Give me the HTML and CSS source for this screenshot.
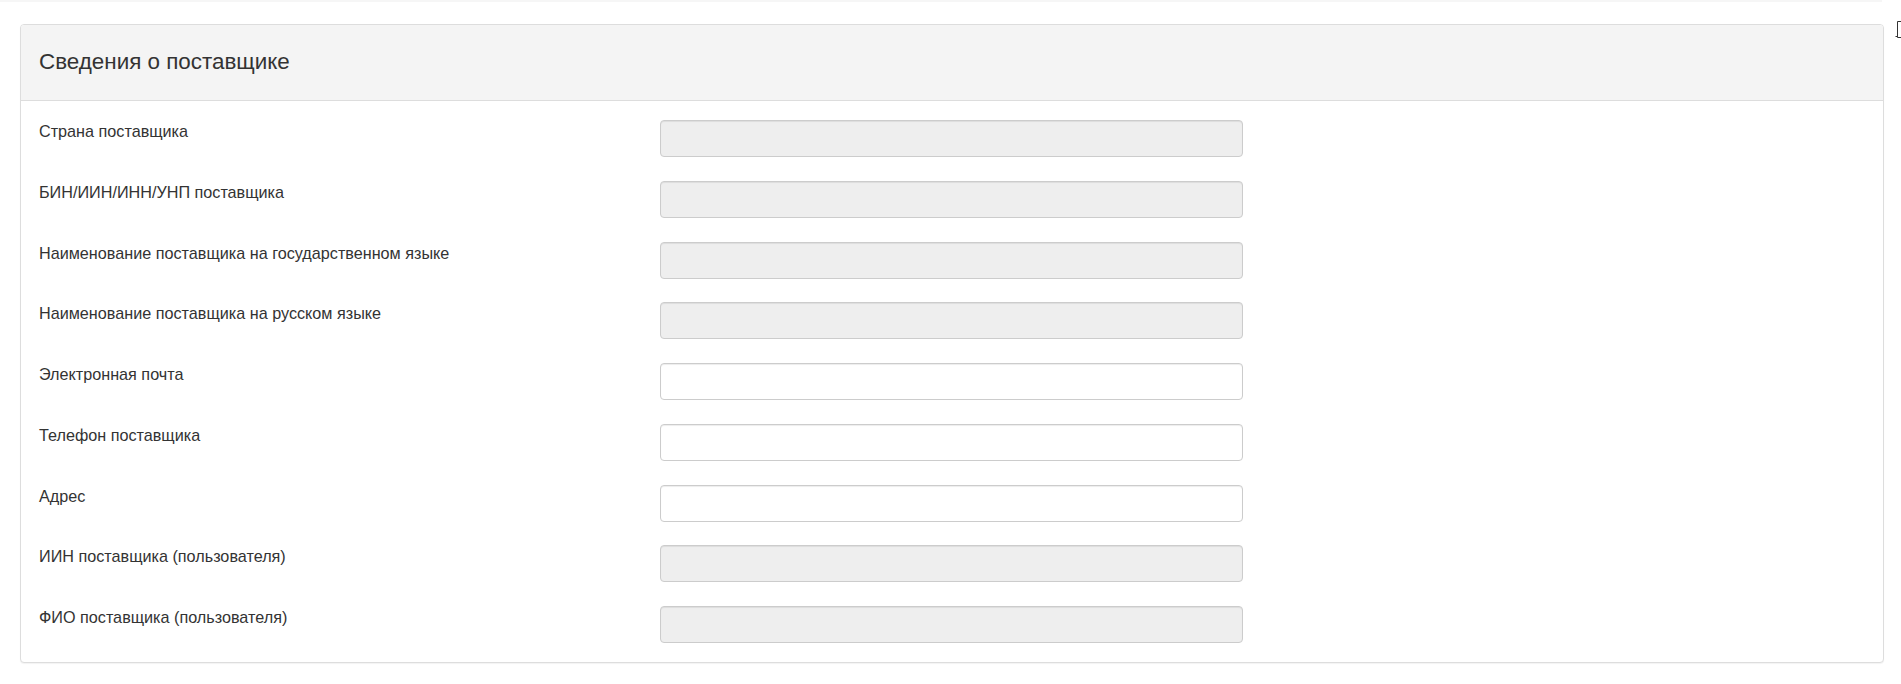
FILE: index.html
```html
<!DOCTYPE html>
<html lang="ru">
<head>
<meta charset="utf-8">
<title>Сведения о поставщике</title>
<link rel="stylesheet" href="styles.css">
</head>
<body>
<div class="topline"></div>
<div class="page">
  <div class="panel">
    <div class="panel-heading">
      <h3 class="panel-title">Сведения о поставщике</h3>
    </div>
    <div class="panel-body">
      <div class="form-row">
        <label class="form-label">Страна поставщика</label>
        <input class="form-control" type="text" disabled>
      </div>
      <div class="form-row">
        <label class="form-label">БИН/ИИН/ИНН/УНП поставщика</label>
        <input class="form-control" type="text" disabled>
      </div>
      <div class="form-row">
        <label class="form-label">Наименование поставщика на государственном языке</label>
        <input class="form-control" type="text" disabled>
      </div>
      <div class="form-row">
        <label class="form-label">Наименование поставщика на русском языке</label>
        <input class="form-control" type="text" disabled>
      </div>
      <div class="form-row">
        <label class="form-label">Электронная почта</label>
        <input class="form-control" type="text">
      </div>
      <div class="form-row">
        <label class="form-label">Телефон поставщика</label>
        <input class="form-control" type="text">
      </div>
      <div class="form-row">
        <label class="form-label">Адрес</label>
        <input class="form-control" type="text">
      </div>
      <div class="form-row">
        <label class="form-label">ИИН поставщика (пользователя)</label>
        <input class="form-control" type="text" disabled>
      </div>
      <div class="form-row">
        <label class="form-label">ФИО поставщика (пользователя)</label>
        <input class="form-control" type="text" disabled>
      </div>
    </div>
  </div>
</div>
<div class="corner-icon">
  <svg width="8" height="17" viewBox="0 0 8 17"><path d="M2.5 0.5 H8 M2.5 0.5 V16.5 H8 M0.5 15.5 H2" fill="none" stroke="#333" stroke-width="1"/></svg>
</div>
</body>
</html>
```

FILE: styles.css
```css
html, body {
  margin: 0;
  padding: 0;
  background: #fff;
}
body {
  font-family: "Liberation Sans", Arial, Helvetica, sans-serif;
  color: #333;
  position: relative;
  width: 1901px;
  height: 684px;
  overflow: hidden;
}
.topline {
  height: 2px;
  width: 1882px;
  background: #f6f6f6;
}
.page {
  padding: 22px 17px 0 20px;
}
.panel {
  border: 1px solid #dddddd;
  border-radius: 4px;
  box-shadow: 0 1px 1px rgba(0, 0, 0, 0.05);
  background: #fff;
}
.panel-heading {
  background: #f4f4f4;
  border-bottom: 1px solid #dddddd;
  border-radius: 3px 3px 0 0;
  height: 76px;
  box-sizing: border-box;
  padding: 0 18px 2px;
  display: flex;
  align-items: center;
}
.panel-title {
  margin: 0;
  font-size: 22.4px;
  font-weight: normal;
  color: #333;
}
.panel-body {
  padding: 19px 18px 19px 18px;
  display: flex;
  flex-direction: column;
  gap: 23.75px;
}
.form-row {
  display: flex;
  align-items: flex-start;
}
.form-label {
  width: 621px;
  flex: none;
  font-size: 16.2px;
  line-height: 20px;
  padding-top: 1px;
  color: #333;
}
.form-control {
  width: 583px;
  height: 37px;
  box-sizing: border-box;
  border: 1px solid #cccccc;
  border-radius: 4px;
  background: #fff;
  box-shadow: inset 0 1px 1px rgba(0, 0, 0, 0.075);
  margin: 0;
  padding: 6px 12px;
  font: inherit;
}
.form-control:disabled {
  background: #eeeeee;
}
.corner-icon {
  position: absolute;
  left: 1895px;
  top: 21px;
}
```
